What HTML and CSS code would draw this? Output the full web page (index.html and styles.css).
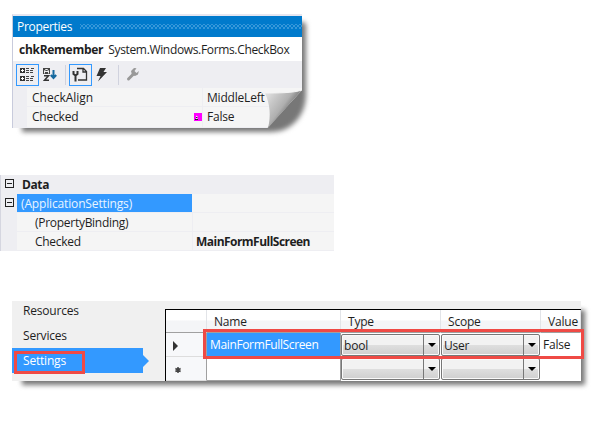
FILE: index.html
```html
<!DOCTYPE html>
<html lang="en">
<head>
<meta charset="utf-8">
<title>Properties</title>
<link rel="stylesheet" href="styles.css">
</head>
<body>
<section class="shadow props-shadow">
  <div class="props">
    <header class="titlebar"><span>Properties</span><i class="grip"></i></header>
    <div class="object"><b>chkRemember</b><span class="type">System.Windows.Forms.CheckBox</span></div>
    <div class="toolbar">
      <span class="tool on"><svg width="22" height="22" viewBox="0 0 22 22"><path fill="#333" d="M4 4h5v5H4zM4 12h5v5H4z"/><path stroke="#fff" d="M5 6.500h3M6.500 5v3M5 14.500h3M6.500 13v3"/><path stroke="#444" stroke-dasharray="3 1" d="M10 4.500h4M10 6.500h8M10 8.500h8M10 12.500h4M10 14.500h8M10 16.500h8M15 4.500h3M15 12.500h3"/></svg></span>
      <span class="tool sort"><svg width="18" height="22" viewBox="0 0 18 22"><path fill="#444" d="M1 4h7v6H1z"/><path fill="none" stroke="#eee" d="M2.500 9.500V7l1-1.500h2l1 1.500v2.500M3 7.500h3"/><path fill="none" stroke="#333" stroke-width="1.500" d="M2 11.800h4.500l-4 4.400H7"/><path fill="none" stroke="#17699f" stroke-width="2" d="M11.500 6v8M8.800 11l2.700 3 2.700-3"/></svg></span>
      <i class="bar"></i>
      <span class="tool on"><svg width="22" height="22" viewBox="0 0 22 22"><path fill="none" stroke="#333" stroke-width="1.300" d="M8 4.500h6.500l3 3V16H9M14 4.500V8h3.500"/><path fill="none" stroke="#333" stroke-width="2" d="M4.500 7v3l2 1.500 2-1.500V7M6.500 11v6.500"/></svg></span>
      <span class="tool bolt"><svg width="18" height="22" viewBox="0 0 18 22"><path fill="#333" d="M5 4h6L8.500 8H12L3 17.500 5.500 12H1.500z"/></svg></span>
      <i class="bar second"></i>
      <span class="tool wrench"><svg width="16" height="22" viewBox="0 0 16 22"><path stroke="#999" stroke-width="3" stroke-linecap="round" d="M2.500 15l4.500-4.500"/><path fill="#999" d="M6 11L5 7l3-3 2.500.2L8.500 7l2 2 2.400-2L12 10.500l-3 1.500z"/></svg></span>
    </div>
    <div class="prop"><span class="key k1">CheckAlign</span><span class="val">MiddleLeft</span></div>
    <div class="prop last"><span class="key">Checked</span><span class="val">False</span><i class="bound"><svg width="8" height="8"><path fill="none" stroke="#fff" d="M2 3l2 1.500L2 6"/><path stroke="#222" d="M2 4.500h1.500M1 6.500h3"/></svg></i></div>
  </div>
  <svg class="curl" width="42" height="42" viewBox="0 0 42 42"><defs><linearGradient id="fold" x1="0.050" y1="0.150" x2="0.620" y2="0.580"><stop offset="0" stop-color="#ddd"/><stop offset=".3" stop-color="#c8c8c8"/><stop offset=".7" stop-color="#b0b0b0"/><stop offset="1" stop-color="#777"/></linearGradient></defs><path fill="url(#fold)" d="M0 6C12 6 29 6 37 3L3 41C6 29 5 17 0 6Z"/><path fill="none" stroke="#f5f5f5" d="M0 6C12 6 29 6 37 3"/></svg>
</section>

<section class="grid">
  <div class="row cat"><span class="gut"><i class="minus"></i></span><b class="data">Data</b></div>
  <div class="row"><span class="gut"><i class="minus"></i></span><span class="name sel">(ApplicationSettings)</span><span class="value"></span></div>
  <div class="row"><span class="gut"></span><span class="name sub">(PropertyBinding)</span><span class="value"></span></div>
  <div class="row"><span class="gut"></span><span class="name sub">Checked</span><b class="value">MainFormFullScreen</b></div>
</section>

<section class="shadow settings-shadow">
  <div class="settings">
    <nav class="side"><span>Resources</span><span>Services</span><span class="active">Settings</span></nav>
    <div class="table">
      <div class="cell head"></div><div class="cell head h">Name</div><div class="cell head h">Type</div><div class="cell head h">Scope</div><div class="cell head h">Value</div>
      <div class="cell rowhead"><svg width="6" height="10"><path fill="#333" d="M0 0l5 5-5 5z"/></svg></div><div class="cell chosen">MainFormFullScreen</div><div class="combo"><span>bool</span><i></i></div><div class="combo"><span>User</span><i></i></div><div class="cell v">False</div>
      <div class="cell rowhead star"><svg width="6" height="6"><path stroke="#444" stroke-width="1.500" d="M3 0v6M.4 1.500l5.200 3M5.600 1.500l-5.200 3"/></svg></div><div class="cell"></div><div class="combo"><span></span><i></i></div><div class="combo"><span></span><i></i></div><div class="cell v"></div>
    </div>
  </div>
  <i class="mark side-mark"></i><i class="mark row-mark"></i>
</section>
</body>
</html>
```
FILE: styles.css
```css
* { box-sizing: border-box; }
body { margin: 0; padding-top: 14px; width: 610px; height: 426px; overflow: hidden; background: #fff; color: #1e1e1e; font: 12px/19px "Open Sans", "Noto Sans", sans-serif; letter-spacing: -.2px; white-space: nowrap; }
svg { display: block; }
.shadow { position: relative; margin-left: 12px; }
.shadow::before { content: ""; position: absolute; z-index: -1; background: #777; filter: blur(2.5px); }
.props-shadow { width: 290px; height: 114px; }
.props-shadow::before { left: 10px; top: 8px; width: 284px; height: 110px; border-radius: 0 4px 34px 0 / 0 4px 37px 0; }
.props { height: 114px; background: #eeeef2; border-top: 2px solid #e6e6f0; border-left: 1px solid #c8cbdc; clip-path: polygon(0 0, 100% 0, 100% 76px, 255px 100%, 0 100%); }
.titlebar { height: 21px; display: flex; align-items: center; gap: 8px; padding-left: 4px; background: #007acc; color: #fff; letter-spacing: -.3px; line-height: 22px; }
.grip { flex: 1; height: 5px; background: radial-gradient(circle, #74b9ea 0 .6px, transparent .8px) 0 0 / 4px 4px, radial-gradient(circle, #74b9ea 0 .6px, transparent .8px) 2px 2px / 4px 4px; }
.object { height: 24px; display: flex; align-items: center; gap: 5px; padding-left: 6px; background: #fff; }
.object b { letter-spacing: -.28px; }
.type { letter-spacing: -.34px; }
.toolbar { height: 27px; display: flex; align-items: center; padding-left: 3px; }
.tool { display: block; height: 22px; }
.on { width: 23px; border: 1px solid #3399ff; overflow: hidden; }
.on svg { margin: -1px; }
.sort { margin-left: 3px; }
.bar { width: 1px; height: 20px; margin: 0 3px 0 5px; background: #d0d2de; }
.bolt { margin-left: 3px; }
.second { margin: 0 7px 0 5px; }
.prop { position: relative; height: 19px; margin-left: 14px; display: flex; background: #f5f5f5; border-bottom: 1px solid #eeeef2; line-height: 20px; }
.last { height: 21px; }
.key { width: 176px; padding-left: 5px; border-right: 1px solid #eeeef2; }
.k1 { letter-spacing: 0; }
.val { padding-left: 4px; }
.bound { position: absolute; left: 167px; top: 6px; width: 8px; height: 8px; background: #f0f; }
.curl { position: absolute; left: 253px; top: 73px; }
.grid { width: 334px; height: 74px; margin-top: 47px; background: #f5f5f5; }
.row { display: flex; height: 18px; margin-bottom: 1px; background: #f5f5f5; box-shadow: 0 1px #eeeef2; }
.row:last-child { margin: 0; }
.cat { background: #eeeef2; }
.gut { width: 17px; height: 19px; padding: 4px 0 0 4px; background: #eeeef2; border-left: 1px solid #d5d6e0; }
.minus { display: block; width: 9px; height: 9px; border: 1px solid #222; background: linear-gradient(#222, #222) center / 5px 1px no-repeat; }
.data { padding-left: 5px; letter-spacing: -.4px; }
.name { width: 176px; padding-left: 4px; border-right: 1px solid #eeeef2; }
.sel { width: 175px; margin-right: 1px; background: #39f; color: #e8f4ff; border: 0; letter-spacing: -.15px; }
.sub { padding-left: 18px; }
.sub { letter-spacing: -.28px; }
.value { padding-left: 3px; letter-spacing: -.53px; }
.settings-shadow { width: 569px; height: 80px; margin-top: 52px; }
.settings-shadow::before { left: 10px; top: 9px; width: 563px; height: 75px; }
.settings { display: flex; width: 569px; height: 80px; background: #f0f0f0; }
.side { width: 153px; display: flex; flex-direction: column; }
.side span { height: 25px; padding-left: 11px; line-height: 25px; }
.side span:first-child { height: 22px; line-height: 20px; }
.side .active { position: relative; width: 131px; background: #39f; color: #fff; }
.active::after { content: ""; position: absolute; left: 131px; top: 7px; border-left: 6px solid #39f; border-top: 6px solid transparent; border-bottom: 6px solid transparent; }
.table { width: 416px; height: 72px; margin-top: 8px; border-top: 1px solid #000; border-left: 1px solid #000; background: #fff; display: grid; grid-template-columns: 41px 134px 100px 100px 40px; grid-template-rows: 23px 24px 24px; overflow: hidden; }
.cell { border-right: 1px solid #a0a0a0; border-bottom: 1px solid #a0a0a0; }
.head { background: linear-gradient(#fff 45%, #f4f5f7 50%); border-right-color: #e2e4e8; }
.h { padding-left: 7px; line-height: 24px; }
.rowhead { background: #f7f8fa; padding: 8px 0 0 7px; border-bottom-color: #ddd; }
.star { padding: 10px 0 0 9px; }
.chosen { background: #39f; color: #fff; padding-left: 3px; line-height: 24px; letter-spacing: -.36px; }
.combo { margin: 1px 1px 1px 0; border: 1px solid #777; border-radius: 2px; display: flex; background: linear-gradient(#f2f2f2 0 48%, #dedede 52%, #cfcfcf); box-shadow: inset 0 0 0 1px #fafafa; }
.combo span { flex: 1; padding-left: 2px; line-height: 21px; }
.combo i { width: 16px; border-left: 1px solid #777; display: grid; place-items: center; }
.combo i::after { content: ""; border: 4px solid transparent; border-top-color: #000; border-bottom: 0; }
.v { border: 0; padding-left: 2px; line-height: 24px; }
.mark { position: absolute; border: 3px solid #ef4a45; }
.side-mark { left: 2px; top: 50px; width: 71px; height: 23px; }
.row-mark { left: 191px; top: 28px; width: 381px; height: 30px; }
```
